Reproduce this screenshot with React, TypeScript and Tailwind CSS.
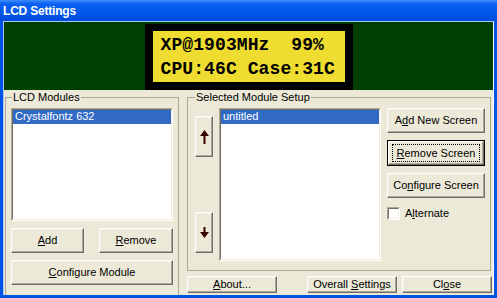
import React from "react";

const ui = "font-['Liberation_Sans',Arial,sans-serif] text-[11px] leading-[13px] text-black";

function Button({
  className = "",
  focused = false,
  children,
}: {
  className?: string;
  focused?: boolean;
  children: React.ReactNode;
}) {
  return (
    <div className={`flex bg-[#ECE9D8] ${focused ? "border border-black" : ""} ${className}`}>
      <div className="relative flex flex-1 items-center justify-center border border-t-white border-l-white border-r-[#716F64] border-b-[#716F64] shadow-[inset_-1px_-1px_0_#ACA899,inset_1px_1px_0_#F1EFE2]">
        {focused && <span className="absolute inset-x-[3px] inset-y-[2px] border border-dotted border-black" />}
        {children}
      </div>
    </div>
  );
}

function ListBox({ className = "", item }: { className?: string; item: string }) {
  return (
    <div className={`flex border border-t-[#ACA899] border-l-[#ACA899] border-r-white border-b-white ${className}`}>
      <div className="flex-1 border border-t-[#716F64] border-l-[#716F64] border-r-[#F1EFE2] border-b-[#F1EFE2] bg-white">
        <div className="h-[14px] bg-[#316AC5] pl-[2px] text-white">{item}</div>
      </div>
    </div>
  );
}

function ArrowUp() {
  return (
    <svg width="11" height="14" viewBox="0 0 11 14">
      <polygon points="5.5,0 10,6 1,6" fill="#3a0000" />
      <rect x="4.5" y="5" width="2" height="9" fill="#3a0000" />
    </svg>
  );
}

function ArrowDown() {
  return (
    <svg width="11" height="11" viewBox="0 0 11 11">
      <rect x="4.5" y="0" width="2" height="6" fill="#3a0000" />
      <polygon points="1,5 10,5 5.5,11" fill="#3a0000" />
    </svg>
  );
}

export default function App() {
  return (
    <div className={`flex h-[298px] w-[497px] flex-col overflow-hidden bg-[#0055E5] ${ui}`}>
      {/* Title bar */}
      <div className="flex h-[21px] shrink-0 items-center bg-[linear-gradient(to_bottom,#3D8EF8_0%,#0A60F2_18%,#0058EC_55%,#004BDB_100%)] pl-[3px] pt-[1px]">
        <span className="font-['Liberation_Sans',Arial,sans-serif] text-[12px] font-bold tracking-[-0.2px] text-white">
          LCD Settings
        </span>
      </div>

      {/* Client area */}
      <div className="mx-[3px] mb-[3px] flex flex-1 flex-col overflow-hidden border-x border-t border-l-[#A9C6F5] border-t-[#A9C6F5] border-r-white bg-[#ECE9D8]">
        {/* LCD preview */}
        <div className="flex h-[68px] shrink-0 justify-center bg-[#004000] pt-[2px]">
          <div className="flex w-[208px] bg-black px-[8px] pb-[8px] pt-[7px]">
            <div className="flex-1 whitespace-pre bg-[#EFDC30] pl-[8px] pt-[2px] font-['Liberation_Mono','Courier_New',monospace] text-[18px] font-bold leading-[24px] tracking-[0.1px] text-black">
              <div>XP@1903MHz  99%</div>
              <div>CPU:46C Case:31C</div>
            </div>
          </div>
        </div>

        {/* Dialog body */}
        <div className="flex pl-[1px] pt-[1px]">
          {/* LCD Modules */}
          <fieldset className="h-[210px] w-[174px] shrink-0 border border-[#ACA899] px-[5px]">
            <legend className="ml-[1px] px-[1px] leading-[13px]">LCD Modules</legend>
            <ListBox className="mt-[4px] h-[113px] w-[162px]" item="Crystalfontz 632" />
            <div className="mt-[7px] flex gap-[15px]">
              <Button className="h-[25px] w-[73px]">
                <span><u>A</u>dd</span>
              </Button>
              <Button className="h-[25px] w-[74px]">
                <span><u>R</u>emove</span>
              </Button>
            </div>
            <Button className="mt-[7px] h-[25px] w-[162px]">
              <span><u>C</u>onfigure Module</span>
            </Button>
          </fieldset>

          {/* Right column */}
          <div className="ml-[8px] flex w-[305px] flex-col">
            <fieldset className="h-[180px] w-[304px] border border-[#ACA899] pl-[7px]">
              <legend className="ml-[0px] px-[1px] leading-[13px]">Selected Module Setup</legend>
              <div className="mt-[4px] flex">
                <div className="flex w-[18px] flex-col">
                  <Button className="mt-[8px] h-[41px] w-[18px]">
                    <ArrowUp />
                  </Button>
                  <Button className="mt-[55px] h-[41px] w-[18px]">
                    <ArrowDown />
                  </Button>
                </div>
                <ListBox className="ml-[6px] h-[153px] w-[162px]" item="untitled" />
                <div className="ml-[6px] flex w-[98px] flex-col gap-[7px]">
                  <Button className="h-[25px]">
                    <span>A<u>d</u>d New Screen</span>
                  </Button>
                  <Button className="h-[26px]" focused>
                    <span><u>R</u>emove Screen</span>
                  </Button>
                  <Button className="h-[25px]">
                    <span>Co<u>n</u>figure Screen</span>
                  </Button>
                  <label className="mt-[2px] flex items-center gap-[5px]">
                    <span className="flex h-[13px] w-[13px] border border-t-[#ACA899] border-l-[#ACA899] border-r-white border-b-white">
                      <span className="flex-1 border border-t-[#716F64] border-l-[#716F64] border-r-[#F1EFE2] border-b-[#F1EFE2] bg-white" />
                    </span>
                    <span>A<u>l</u>ternate</span>
                  </label>
                </div>
              </div>
            </fieldset>

            <div className="mt-[5px] flex">
              <Button className="h-[17px] w-[90px]">
                <span><u>A</u>bout...</span>
              </Button>
              <Button className="ml-[30px] h-[17px] w-[90px]">
                <span>Overall <u>S</u>ettings</span>
              </Button>
              <Button className="ml-[5px] h-[17px] w-[90px]">
                <span>Cl<u>o</u>se</span>
              </Button>
            </div>
          </div>
        </div>
      </div>
    </div>
  );
}
